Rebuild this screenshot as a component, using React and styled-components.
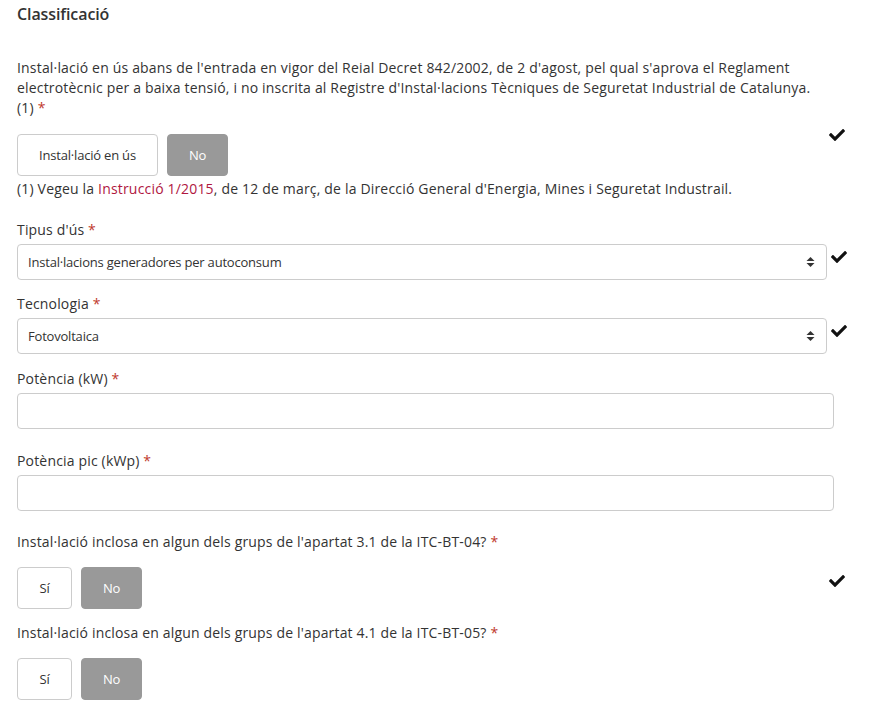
import React from "react";
import styled, { createGlobalStyle } from "styled-components";
import { FaCheck } from "react-icons/fa";

const GlobalStyle = createGlobalStyle`
    body {
        margin: 0;
        background: #fff;
        font-family: 'Open Sans', 'Noto Sans', sans-serif;
        color: #333;
    }
`;

const Page = styled.div`
    width: 816px;
    padding: 3px 0 0 17px;
`;

const Title = styled.h3`
    margin: 0;
    font-size: 16px;
    font-weight: 600;
    line-height: 22px;
    letter-spacing: -0.1px;
    color: #333;
`;

const Text = styled.p`
    margin: ${({ $top }) => $top || 0}px 0 0;
    font-size: 14px;
    line-height: 20px;
    letter-spacing: 0.18px;
`;

const Required = styled.span`
    color: #c0392b;
`;

const Link = styled.a`
    color: #b0173f;
    text-decoration: none;
`;

const Label = styled.label`
    display: block;
    margin-top: ${({ $top }) => $top}px;
    margin-bottom: ${({ $bottom }) => $bottom || 4}px;
    font-size: 14px;
    line-height: 20px;
    letter-spacing: 0.17px;
`;

const ButtonRow = styled.div`
    display: flex;
    align-items: flex-start;
    margin-top: ${({ $top }) => $top}px;
`;

const Buttons = styled.div`
    display: flex;
    gap: 9px;
`;

const Toggle = styled.button`
    box-sizing: border-box;
    height: 42px;
    min-width: ${({ $wide, $active }) => ($wide ? "141px" : $active ? "61px" : "55px")};
    padding: 0 ${({ $wide }) => ($wide ? "20px" : "12px")};
    border: 1px solid ${({ $active }) => ($active ? "#999" : "#ccc")};
    border-radius: 4px;
    background: ${({ $active }) => ($active ? "#999" : "#fff")};
    color: ${({ $active }) => ($active ? "#fff" : "#333")};
    font-family: 'Open Sans', sans-serif;
    font-size: 13px;
    letter-spacing: -0.2px;
    cursor: pointer;
`;

const Check = styled(FaCheck)`
    flex: none;
    margin-left: ${({ $inline }) => ($inline ? "4px" : "auto")};
    margin-top: ${({ $top }) => $top}px;
    margin-right: ${({ $inline }) => ($inline ? "0" : "-12px")};
    width: 16px;
    height: 16px;
    color: #111;
`;

const FieldRow = styled.div`
    display: flex;
    align-items: flex-start;
`;

const SelectBox = styled.div`
    flex: none;
    width: 810px;
    height: 36px;
    box-sizing: border-box;
    border: 1px solid #ccc;
    border-radius: 4px;
    display: flex;
    align-items: center;
    padding: 0 11px 0 10px;
    font-size: 13px;
    letter-spacing: -0.2px;
`;

const SelectValue = styled.span`
    flex: 1;
`;

const Arrows = styled.svg`
    width: 9px;
    height: 12px;
    margin-left: auto;
`;

const Input = styled.input`
    display: block;
    box-sizing: border-box;
    width: 817px;
    height: 36px;
    border: 1px solid #ccc;
    border-radius: 4px;
    padding: 0 10px;
    font-family: 'Open Sans', sans-serif;
    font-size: 13px;
`;

const SelectField = ({ value }) => (
    <FieldRow>
        <SelectBox>
            <SelectValue>{value}</SelectValue>
            <Arrows viewBox="0 0 9 12">
                <path d="M4.5 1 L8.5 5 L0.5 5 Z" fill="#333" />
                <path d="M4.5 11 L8.5 7 L0.5 7 Z" fill="#333" />
            </Arrows>
        </SelectBox>
        <Check $inline $top={5} />
    </FieldRow>
);

const YesNo = ({ checkTop }) => (
    <ButtonRow $top={0}>
        <Buttons>
            <Toggle>Sí</Toggle>
            <Toggle $active>No</Toggle>
        </Buttons>
        {checkTop !== undefined && <Check $top={checkTop} />}
    </ButtonRow>
);

export default function App() {
    return (
        <Page>
            <GlobalStyle />
            <Title>Classificació</Title>
            <Text $top={33}>
                Instal·lació en ús abans de l'entrada en vigor del Reial Decret 842/2002, de 2 d'agost, pel qual s'aprova el Reglament
                electrotècnic per a baixa tensió, i no inscrita al Registre d'Instal·lacions Tècniques de Seguretat Industrial de Catalunya.
                <br />
                (1) <Required>*</Required>
            </Text>
            <ButtonRow $top={16}>
                <Buttons>
                    <Toggle $wide>Instal·lació en ús</Toggle>
                    <Toggle $active>No</Toggle>
                </Buttons>
                <Check $top={-7} />
            </ButtonRow>
            <Text $top={3}>
                (1) Vegeu la <Link href="#">Instrucció 1/2015</Link>, de 12 de març, de la Direcció General d'Energia, Mines i Seguretat Industrail.
            </Text>

            <Label $top={21}>Tipus d'ús <Required>*</Required></Label>
            <SelectField value="Instal·lacions generadores per autoconsum" />

            <Label $top={14}>Tecnologia <Required>*</Required></Label>
            <SelectField value="Fotovoltaica" />

            <Label $top={15}>Potència (kW) <Required>*</Required></Label>
            <Input type="text" />

            <Label $top={22}>Potència pic (kWp) <Required>*</Required></Label>
            <Input type="text" />

            <Label $top={21} $bottom={15}>
                Instal·lació inclosa en algun dels grups de l'apartat 3.1 de la ITC-BT-04? <Required>*</Required>
            </Label>
            <YesNo checkTop={6} />

            <Label $top={14} $bottom={15}>
                Instal·lació inclosa en algun dels grups de l'apartat 4.1 de la ITC-BT-05? <Required>*</Required>
            </Label>
            <YesNo />
        </Page>
    );
}
